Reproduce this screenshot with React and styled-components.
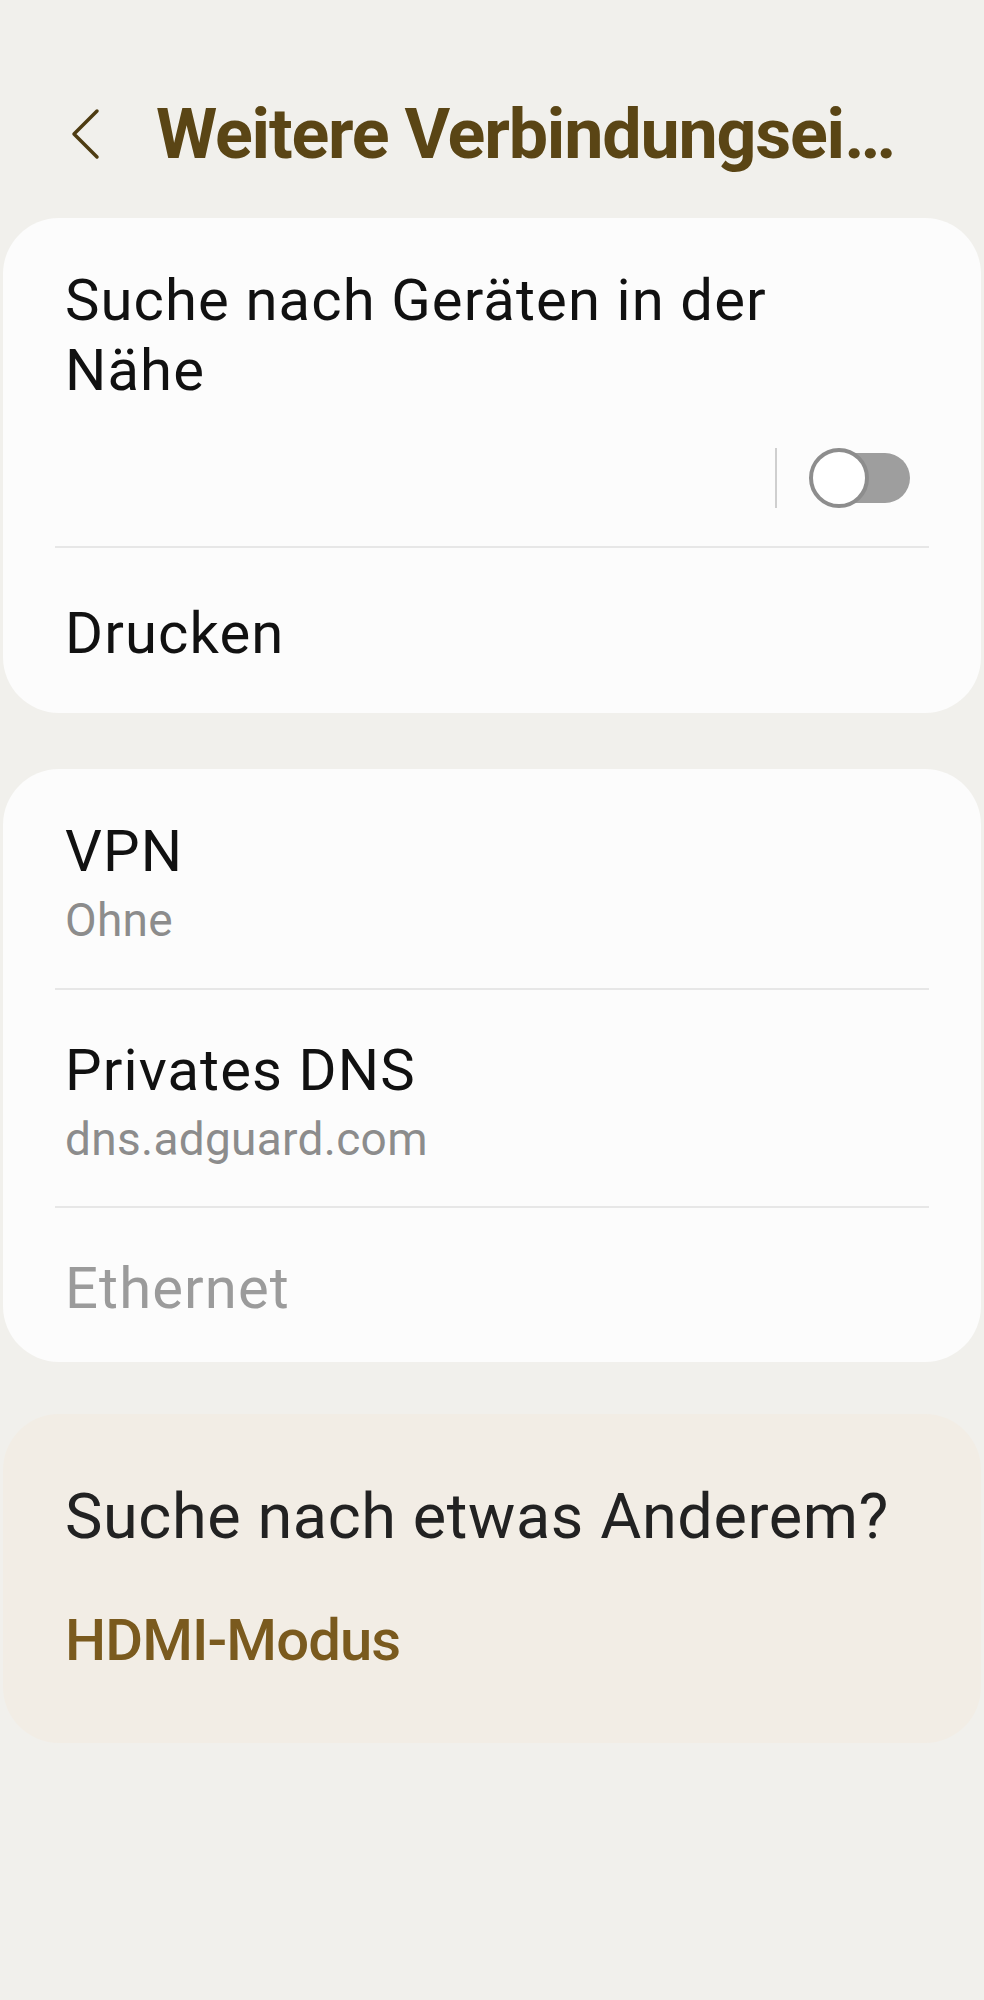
import React from "react";
import styled, { createGlobalStyle } from "styled-components";

const Global = createGlobalStyle`
  html, body { margin: 0; padding: 0; background: #f1f0ec; }
  body { font-family: Roboto, "Noto Sans", sans-serif; -webkit-font-smoothing: antialiased; }
`;

const Page = styled.div`
  width: 984px;
  min-height: 2000px;
  background: #f1f0ec;
  display: flex;
  flex-direction: column;
`;

const Header = styled.header`
  display: flex;
  align-items: center;
  padding: 92px 0 0 70px;
  height: 84px;
  margin-bottom: 42px;
  gap: 56px;
`;

const BackButton = styled.button`
  border: 0;
  background: none;
  padding: 0;
  width: 30px;
  height: 52px;
  display: flex;
  align-items: center;
  justify-content: center;
`;

const Title = styled.h1`
  margin: 0;
  font-family: Roboto, sans-serif;
  font-weight: 700;
  font-size: 70px;
  line-height: 84px;
  color: #5a4515;
  letter-spacing: -1.2px;
  white-space: nowrap;
`;

const Card = styled.section`
  margin: 0 3px ${(p) => p.$gap || 0}px;
  background: ${(p) => (p.$tone === "beige" ? "#f2ede5" : "#fcfcfc")};
  border-radius: 56px;
  display: flex;
  flex-direction: column;
`;

const Row = styled.div`
  padding: ${(p) => p.$pt}px 62px ${(p) => p.$pb}px;
  display: flex;
  flex-direction: column;
`;

const ItemTitle = styled.div`
  font-size: 58px;
  line-height: 70px;
  color: ${(p) => (p.$disabled ? "#9b9b9b" : "#111111")};
  letter-spacing: 1.1px;
  max-width: ${(p) => (p.$narrow ? "712px" : "none")};
`;

const Summary = styled.div`
  margin-top: 6px;
  font-size: 46px;
  line-height: 56px;
  color: #8c8c8c;
  letter-spacing: 0.3px;
`;

const Divider = styled.div`
  height: 2px;
  margin: 0 52px;
  background: #e7e7e7;
`;

const SwitchRow = styled.div`
  display: flex;
  justify-content: flex-end;
  align-items: center;
  margin-top: 43px;
  padding-right: 9px;
`;

const VLine = styled.div`
  width: 2px;
  height: 60px;
  background: #cfcfcf;
  margin-right: 32px;
`;

const Switch = styled.div`
  position: relative;
  width: 101px;
  height: 60px;
  display: flex;
  align-items: center;
`;

const Track = styled.div`
  margin-left: 20px;
  width: 81px;
  height: 50px;
  border-radius: 25px;
  background: #9e9e9e;
`;

const Thumb = styled.div`
  position: absolute;
  left: 0;
  top: 0;
  width: 52px;
  height: 52px;
  border-radius: 50%;
  background: #ffffff;
  border: 4px solid #8d8d8d;
`;

const Prompt = styled.div`
  font-size: 63px;
  line-height: 74px;
  color: #222222;
  letter-spacing: 0.6px;
`;

const Link = styled.a`
  margin-top: 51px;
  font-size: 58px;
  line-height: 70px;
  font-weight: 500;
  color: #7a5a1e;
  text-decoration: none;
  letter-spacing: -0.9px;
`;

export default function App() {
  return (
    <Page>
      <Global />
      <Header>
        <BackButton aria-label="Zurück">
          <svg width="30" height="52" viewBox="0 0 30 52" fill="none">
            <path d="M27 3 L4 26 L27 49" stroke="#4e3c12" strokeWidth="3.5" strokeLinecap="round" strokeLinejoin="round" />
          </svg>
        </BackButton>
        <Title>Weitere Verbindungsei…</Title>
      </Header>

      <Card $gap={56}>
        <Row $pt={47} $pb={38}>
          <ItemTitle $narrow>Suche nach Geräten in der Nähe</ItemTitle>
          <SwitchRow>
            <VLine />
            <Switch>
              <Track />
              <Thumb />
            </Switch>
          </SwitchRow>
        </Row>
        <Divider />
        <Row $pt={50} $pb={45}>
          <ItemTitle>Drucken</ItemTitle>
        </Row>
      </Card>

      <Card $gap={52}>
        <Row $pt={47} $pb={40}>
          <ItemTitle>VPN</ItemTitle>
          <Summary>Ohne</Summary>
        </Row>
        <Divider />
        <Row $pt={45} $pb={39}>
          <ItemTitle>Privates DNS</ItemTitle>
          <Summary>dns.adguard.com</Summary>
        </Row>
        <Divider />
        <Row $pt={45} $pb={39}>
          <ItemTitle $disabled>Ethernet</ItemTitle>
        </Row>
      </Card>

      <Card $tone="beige">
        <Row $pt={66} $pb={68}>
          <Prompt>Suche nach etwas Anderem?</Prompt>
          <Link href="#">HDMI-Modus</Link>
        </Row>
      </Card>
    </Page>
  );
}
